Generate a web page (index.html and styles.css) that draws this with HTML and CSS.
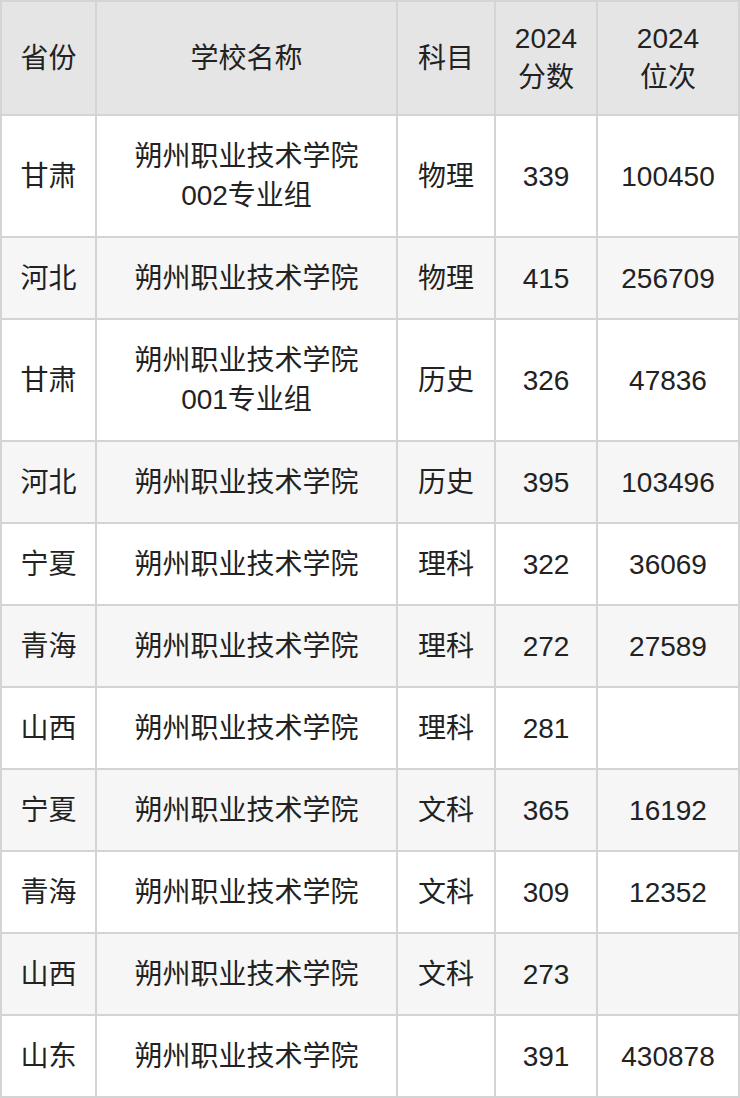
FILE: index.html
```html
<!DOCTYPE html>
<html lang="zh">
<head>
<meta charset="utf-8">
<link rel="stylesheet" href="styles.css">
</head>
<body>
<table class="score-table">
  <colgroup>
    <col class="c1"><col class="c2"><col class="c3"><col class="c4"><col class="c5">
  </colgroup>
  <thead>
    <tr><th>省份</th><th>学校名称</th><th>科目</th><th>2024<br>分数</th><th>2024<br>位次</th></tr>
  </thead>
  <tbody>
    <tr class="tall"><td>甘肃</td><td>朔州职业技术学院<br>002专业组</td><td>物理</td><td>339</td><td>100450</td></tr>
    <tr><td>河北</td><td>朔州职业技术学院</td><td>物理</td><td>415</td><td>256709</td></tr>
    <tr class="tall"><td>甘肃</td><td>朔州职业技术学院<br>001专业组</td><td>历史</td><td>326</td><td>47836</td></tr>
    <tr><td>河北</td><td>朔州职业技术学院</td><td>历史</td><td>395</td><td>103496</td></tr>
    <tr><td>宁夏</td><td>朔州职业技术学院</td><td>理科</td><td>322</td><td>36069</td></tr>
    <tr><td>青海</td><td>朔州职业技术学院</td><td>理科</td><td>272</td><td>27589</td></tr>
    <tr><td>山西</td><td>朔州职业技术学院</td><td>理科</td><td>281</td><td></td></tr>
    <tr><td>宁夏</td><td>朔州职业技术学院</td><td>文科</td><td>365</td><td>16192</td></tr>
    <tr><td>青海</td><td>朔州职业技术学院</td><td>文科</td><td>309</td><td>12352</td></tr>
    <tr><td>山西</td><td>朔州职业技术学院</td><td>文科</td><td>273</td><td></td></tr>
    <tr><td>山东</td><td>朔州职业技术学院</td><td></td><td>391</td><td>430878</td></tr>
  </tbody>
</table>
</body>
</html>
```

FILE: styles.css
```css
html, body {
  margin: 0;
  padding: 0;
  background: #ffffff;
}

.score-table {
  border-collapse: separate;
  border-spacing: 0;
  table-layout: fixed;
  width: 740px;
  border-top: 2px solid #d4d4d4;
  border-left: 2px solid #d4d4d4;
  font-family: "Liberation Sans", "Noto Sans CJK SC", sans-serif;
  font-size: 28px;
  line-height: 39px;
  color: #222222;
}

.c1 { width: 95px; }
.c2 { width: 301px; }
.c3 { width: 98px; }
.c4 { width: 102px; }
.c5 { width: 142px; }

.score-table th,
.score-table td {
  border-right: 2px solid #d4d4d4;
  border-bottom: 2px solid #d4d4d4;
  text-align: center;
  vertical-align: middle;
  padding: 0;
  font-weight: normal;
}

.score-table th {
  background: #e5e5e5;
  height: 112px;
}

.score-table td {
  height: 80px;
}

.score-table tr.tall td {
  height: 120px;
}

.score-table tbody tr:nth-child(even) td {
  background: #f6f6f6;
}
```
